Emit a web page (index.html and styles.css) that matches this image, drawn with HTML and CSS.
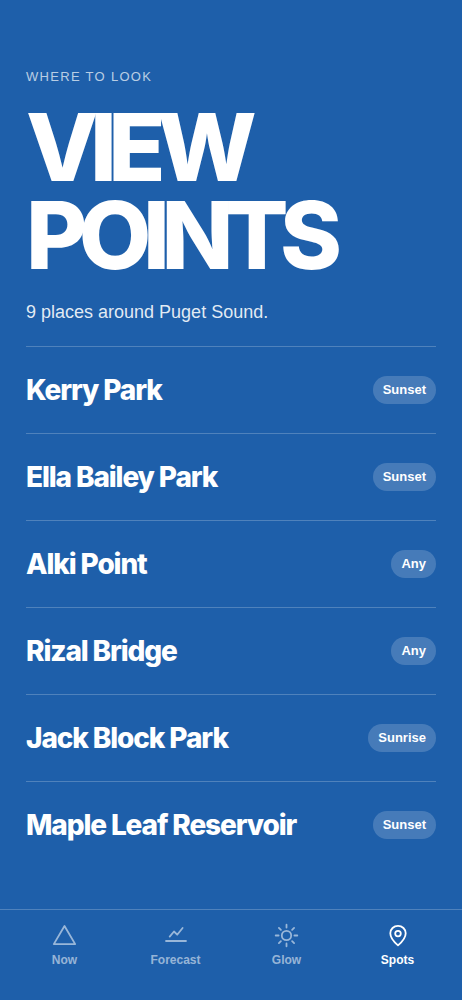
FILE: index.html
```html
<!DOCTYPE html>
<html lang="en">
<head>
  <meta charset="utf-8">
  <meta name="viewport" content="width=device-width, initial-scale=1">
  <title>View Points</title>
  <link rel="stylesheet" href="styles.css">
</head>
<body>
  <main class="page">
    <header class="intro">
      <p class="eyebrow">WHERE TO LOOK</p>
      <h1 class="title">VIEW<br>POINTS</h1>
      <p class="summary">9 places around Puget Sound.</p>
    </header>
    <ul class="spots">
      <li class="spot"><h2 class="spot-name">Kerry Park</h2><span class="tag">Sunset</span></li>
      <li class="spot"><h2 class="spot-name">Ella Bailey Park</h2><span class="tag">Sunset</span></li>
      <li class="spot"><h2 class="spot-name">Alki Point</h2><span class="tag">Any</span></li>
      <li class="spot"><h2 class="spot-name">Rizal Bridge</h2><span class="tag">Any</span></li>
      <li class="spot"><h2 class="spot-name">Jack Block Park</h2><span class="tag">Sunrise</span></li>
      <li class="spot"><h2 class="spot-name">Maple Leaf Reservoir</h2><span class="tag">Sunset</span></li>
    </ul>
  </main>
  <nav class="tabs" aria-label="Main">
    <a class="tab" href="#now">
      <svg class="icon" viewBox="0 0 28 28" aria-hidden="true"><path d="M13.5 5 2.8 23.1h21.4z"/></svg>
      Now
    </a>
    <a class="tab" href="#forecast">
      <svg class="icon" viewBox="0 0 28 28" aria-hidden="true"><path d="M4 20h20M7.7 15.6l4.3-5.1 3.2 3.2L20.6 7"/></svg>
      Forecast
    </a>
    <a class="tab" href="#glow">
      <svg class="icon" viewBox="0 0 28 28" aria-hidden="true"><circle cx="13.5" cy="14.5" r="4.7"/><path d="M13.5 3.7v2.9M13.5 22.4v2.9M2.7 14.5h2.9M21.4 14.5h2.9M5.9 6.9l2 2M19.1 20.1l2 2M21.1 6.9l-2 2M7.9 20.1l-2 2"/></svg>
      Glow
    </a>
    <a class="tab tab-active" href="#spots" aria-current="page">
      <svg class="icon" viewBox="0 0 28 28" aria-hidden="true"><path d="M14 24.4s-7.7-6.5-7.7-12.1a7.7 7.5 0 0 1 15.4 0c0 5.6-7.7 12.1-7.7 12.1z"/><circle cx="14" cy="12.6" r="2.8"/></svg>
      Spots
    </a>
  </nav>
</body>
</html>
```

FILE: styles.css
```css
* {
  box-sizing: border-box;
}

body {
  display: flex;
  flex-direction: column;
  min-height: 100vh;
  margin: 0;
  background: #1e5faa;
  color: #fff;
  font-family: "Liberation Sans", Arial, sans-serif;
}

.page {
  flex: 1;
  padding: 69px 26px 40px;
}

.eyebrow {
  margin: 0;
  color: rgb(255 255 255 / 70%);
  font-size: 13px;
  line-height: 16px;
  letter-spacing: 0.1em;
}

.title {
  margin: 18px 0 0;
  font-family: Inter, "Liberation Sans", sans-serif;
  font-size: 94px;
  font-weight: 800;
  line-height: 88px;
  letter-spacing: -0.09em;
}

.summary {
  margin: 19px 0 0;
  color: rgb(255 255 255 / 88%);
  font-size: 18px;
  line-height: 28px;
}

.spots {
  margin: 20px 0 0;
  padding: 0;
  list-style: none;
}

.spot {
  display: flex;
  align-items: center;
  justify-content: space-between;
  gap: 16px;
  min-height: 87px;
  border-top: 1px solid rgb(255 255 255 / 22%);
}

.spot-name {
  margin: 0;
  font-family: Inter, "Liberation Sans", sans-serif;
  font-size: 28px;
  font-weight: 800;
  line-height: 32px;
  letter-spacing: -0.04em;
}

.tag {
  padding: 6px 10px;
  border-radius: 16px;
  background: rgb(255 255 255 / 18%);
  font-size: 13px;
  font-weight: 700;
  line-height: 16px;
}

.tabs {
  position: sticky;
  bottom: 0;
  display: flex;
  padding: 11px 9px 32px;
  border-top: 1px solid rgb(255 255 255 / 22%);
  background: #1e5faa;
}

.tab {
  display: flex;
  flex: 1;
  flex-direction: column;
  align-items: center;
  gap: 3px;
  color: rgb(255 255 255 / 55%);
  font-size: 12px;
  font-weight: 700;
  line-height: 16px;
  text-decoration: none;
}

.tab-active {
  color: #fff;
}

.icon {
  width: 28px;
  height: 28px;
  fill: none;
  stroke: currentColor;
  stroke-width: 1.8;
  stroke-linecap: round;
  stroke-linejoin: round;
}
```
